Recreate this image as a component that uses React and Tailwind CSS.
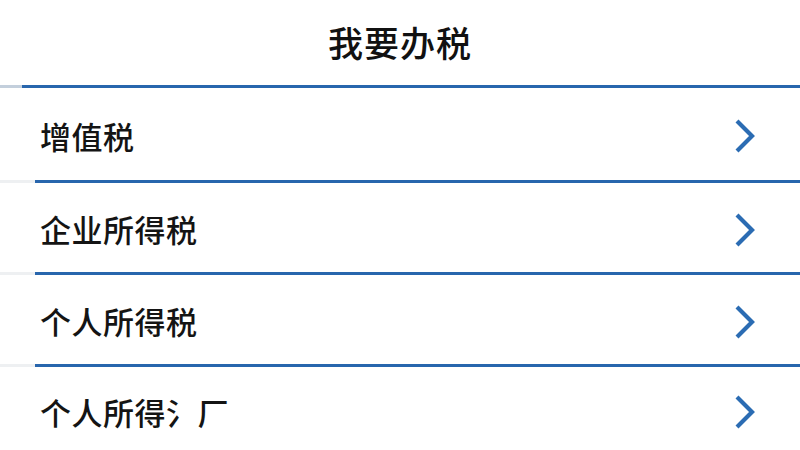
import React from "react";

const Chevron = () => (
  <svg width="22" height="36" viewBox="0 0 22 36" fill="none">
    <path d="M3 3 L18 18 L3 33" stroke="#2b6cb3" strokeWidth="4.2" strokeLinecap="butt" strokeLinejoin="miter" />
  </svg>
);

const Divider = ({ gray = 35, grayColor = "bg-[#eef0f2]" }) => (
  <div className="flex h-[3px] w-full">
    <div className={`h-full ${grayColor}`} style={{ width: gray }} />
    <div className="h-full flex-1 bg-[#2866ad]" />
  </div>
);

const Row = ({ label, h }) => (
  <div className="flex items-center justify-between pl-[40px] pr-[44px]" style={{ height: h }}>
    <span className="text-[31px] font-medium leading-none text-[#141414] pt-[2px] tracking-[0.5px]">{label}</span>
    <span className="pt-[4px]"><Chevron /></span>
  </div>
);

export default function App() {
  return (
    <div
      className="w-[800px] h-[450px] overflow-hidden bg-white"
      style={{ fontFamily: '"Noto Sans CJK SC", "Noto Sans", sans-serif' }}
    >
      <div className="h-[85px] flex items-center justify-center">
        <span className="text-[35px] font-medium leading-none text-[#111] tracking-[1px] pb-[2px]">我要办税</span>
      </div>
      <div className="flex h-[3px] w-full">
        <div className="h-full w-[22px] bg-[#c3cfdc]" />
        <div className="h-full flex-1 bg-[#2866ad]" />
      </div>
      <Row label="增值税" h={92} />
      <Divider />
      <Row label="企业所得税" h={89} />
      <Divider />
      <Row label="个人所得税" h={89} />
      <Divider />
      <Row label="个人所得氵厂" h={86} />
    </div>
  );
}
